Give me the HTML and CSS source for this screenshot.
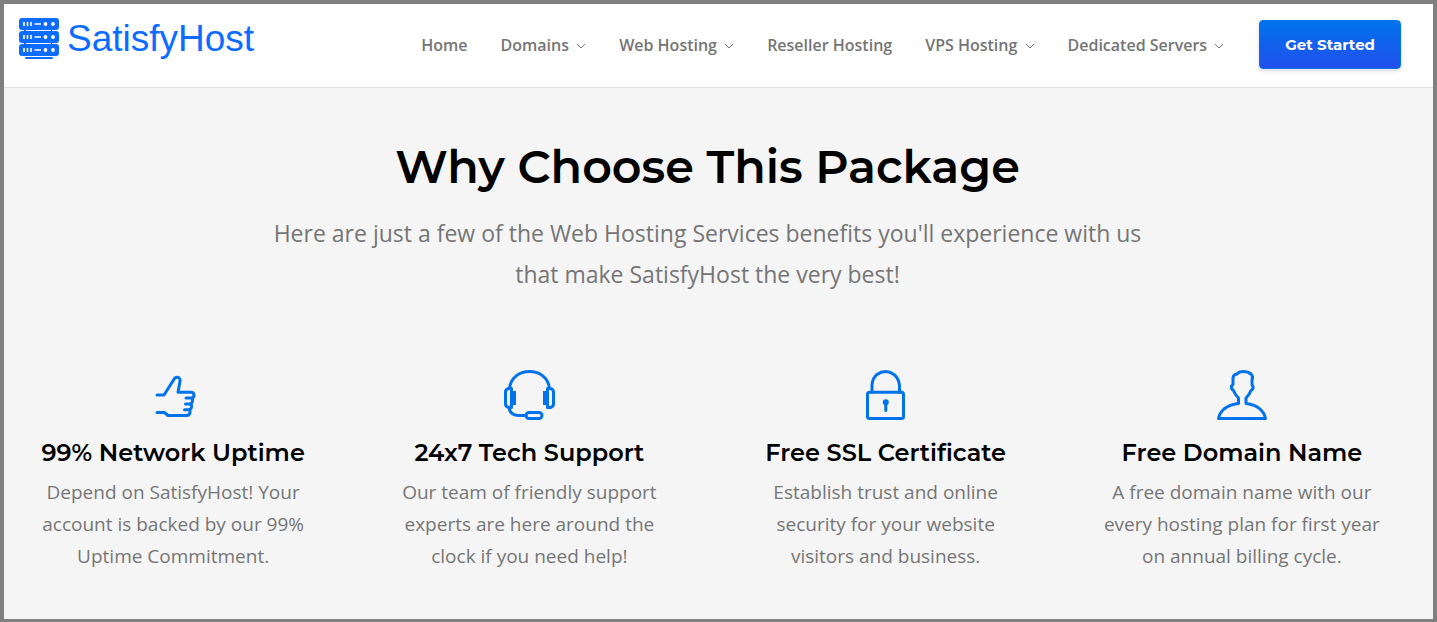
FILE: index.html
```
<!DOCTYPE html>
<html lang="en">

<head>
  <meta charset="UTF-8">
  <meta name="viewport" content="width=device-width, initial-scale=1.0">
  <title>SatisfyHost - Web Hosting</title>
  <link rel="stylesheet" href="styles.css">
</head>

<body>
  <header class="header">
    <a href="#" class="logo">
      <svg class="logo-icon" viewBox="0 0 40 42" aria-hidden="true">
        <g fill="#0c6cff">
          <rect x="0" y="0" width="40" height="12" rx="3" />
          <rect x="0" y="13" width="40" height="12" rx="3" />
          <rect x="0" y="26" width="40" height="12" rx="3" />
          <path d="M5 11h28v4H5zM5 24h28v4H5z" />
          <rect x="6" y="39" width="28" height="2" rx="1" />
        </g>
        <g fill="none" stroke="#fff">
          <path d="M7 12.500h25M7 25.500h25" />
          <path stroke-width="1.600" d="M5 4v4M8.500 4v4M12 4v4M5 17v4M8.500 17v4M12 17v4M5 30v4M8.500 30v4M12 30v4" />
          <path stroke-width="1.600" d="M15.500 6H22M15.500 19H22M15.500 32H22" />
        </g>
        <g fill="#fff">
          <circle cx="26.500" cy="6" r="1.900" />
          <circle cx="34" cy="6" r="1.900" />
          <circle cx="26.500" cy="19" r="1.900" />
          <circle cx="34" cy="19" r="1.900" />
          <circle cx="26.500" cy="32" r="1.900" />
          <circle cx="34" cy="32" r="1.900" />
        </g>
      </svg>
      <span>SatisfyHost</span>
    </a>
    <nav class="nav">
      <a href="#">Home</a>
      <a href="#">Domains <svg class="arrow" viewBox="0 0 10 6"><path d="M1 1l4 4 4-4" /></svg></a>
      <a href="#">Web Hosting <svg class="arrow" viewBox="0 0 10 6"><path d="M1 1l4 4 4-4" /></svg></a>
      <a href="#">Reseller Hosting</a>
      <a href="#">VPS Hosting <svg class="arrow" viewBox="0 0 10 6"><path d="M1 1l4 4 4-4" /></svg></a>
      <a href="#">Dedicated Servers <svg class="arrow" viewBox="0 0 10 6"><path d="M1 1l4 4 4-4" /></svg></a>
    </nav>
    <button class="start-button" type="button">Get Started</button>
  </header>

  <main class="why">
    <div class="intro">
      <h1>Why Choose This Package</h1>
      <p>Here are just a few of the Web Hosting Services benefits you'll experience with us that make SatisfyHost the very best!</p>
    </div>

    <div class="features">
      <div class="feature">
        <svg class="feature-icon" viewBox="-2 0 70 70" aria-hidden="true">
          <path d="M17 35h7L34.500 18.500Q36 16.500 38.500 17.500Q40.500 18.500 40 21.500L38 32.300H50.500Q54 32.300 54 35.200Q54 38 51 38H46M51 38Q53 38.500 52.500 41Q52 43.900 49.500 43.900H45.500M49.500 43.900Q52 44.300 51.500 47Q51 49.800 48.500 49.800H44.500M48.500 49.800Q50.500 50.300 50 52.500Q49.500 55.500 46.500 55.500H28L24.500 52.500H17" />
        </svg>
        <h2>99% Network Uptime</h2>
        <p>Depend on SatisfyHost! Your account is backed by our 99% Uptime Commitment.</p>
      </div>
      <div class="feature">
        <svg class="feature-icon" viewBox="-1 0 70 70" aria-hidden="true">
          <path d="M14.500 28.500C15.500 18 24 11.500 34.500 11.500S53.500 18 54.500 28.500" />
          <path d="M16.500 28.500h-3Q10.500 29.500 10.500 32v12Q10.500 46.500 13.500 47.500h3zM52.500 28.500h3Q58.500 29.500 58.500 32v12Q58.500 46.500 55.500 47.500h-3z" />
          <path class="solid" d="M16 31h5v14h-5zM48 31h5v14h-5z" />
          <path d="M14 47.500Q15 55.500 23.500 55.500H31" />
          <rect x="31" y="52.500" width="16" height="6" rx="3" />
        </svg>
        <h2>24x7 Tech Support</h2>
        <p>Our team of friendly support experts are here around the clock if you need help!</p>
      </div>
      <div class="feature">
        <svg class="feature-icon" viewBox="1 0 70 70" aria-hidden="true">
          <rect x="17.500" y="32.300" width="36" height="26.200" rx="2" />
          <path d="M22 32V25Q22.500 18 27 14.500Q31 11.500 35.500 11.500T44 14.500Q48.500 18 49.500 25V32" />
          <circle class="solid" cx="35.800" cy="42.300" r="3" />
          <path d="M35.800 43v7.500" />
        </svg>
        <h2>Free SSL Certificate</h2>
        <p>Establish trust and online security for your website visitors and business.</p>
      </div>
      <div class="feature">
        <svg class="feature-icon" viewBox="0 0 70 70" aria-hidden="true">
          <path d="M31.500 43.500V38Q28 34.500 26.500 30.500Q24 29 24.500 26L26 24.500V17.500Q26.500 14.500 30 14Q32 11.500 36 11.500Q41 11.500 44 14Q46.500 16.500 45 20V24.500L46 26.500Q46.500 29 44 30.500Q42.500 34.500 39 38V43.500Q48 44.500 53 49Q57.500 53 58.500 58.500H11.500Q12.500 53 17 49Q22.500 44.500 31.500 43.500Z" />
        </svg>
        <h2>Free Domain Name</h2>
        <p>A free domain name with our every hosting plan for first year on annual billing cycle.</p>
      </div>
    </div>
  </main>
</body>

</html>
```
FILE: styles.css
```
* {
  box-sizing: border-box;
}

body {
  margin: 0;
  min-height: 100vh;
  border: 4px solid #808080;
  border-bottom-width: 3px;
  background-color: #f5f5f5;
  color: #757575;
  font-family: "Open Sans", sans-serif;
}

.header {
  display: flex;
  align-items: center;
  padding: 14px 32px 18px 15px;
  background-color: #fff;
  border-bottom: 1px solid #dfdfdf;
}

.logo {
  display: flex;
  align-items: center;
  align-self: flex-start;
  gap: 8px;
  margin-right: auto;
  color: #0c6cff;
  font-family: "Liberation Sans", Arial, sans-serif;
  font-size: 37px;
  line-height: 40px;
  text-decoration: none;
}

.logo-icon {
  width: 40px;
  height: 42px;
}

.nav {
  display: flex;
  gap: 33px;
  margin-top: 2px;
  margin-right: 35px;
}

.nav a {
  color: #757575;
  font-size: 16px;
  font-weight: 600;
  line-height: 24px;
  text-decoration: none;
  white-space: nowrap;
}

.arrow {
  width: 10px;
  height: 6px;
  margin-left: 3px;
  vertical-align: 2px;
  fill: none;
  stroke: #757575;
}

.start-button {
  margin-top: 2px;
  padding: 0 25px;
  border: 1px solid #0073ec;
  border-radius: 4px;
  background-image: linear-gradient(#0073ec, #2250ee);
  box-shadow: 0 2px 4px rgba(0, 0, 0, 0.15);
  color: #fff;
  font-family: Montserrat, Inter, sans-serif;
  font-size: 15px;
  font-weight: 700;
  line-height: 47px;
  white-space: nowrap;
}

.why {
  padding: 49px 53px 40px 31px;
  text-align: center;
}

.intro {
  max-width: 900px;
  margin: 0 auto;
}

.intro h1 {
  margin: 0;
  color: #000;
  font-family: Montserrat, Inter, sans-serif;
  font-size: 46px;
  font-weight: 600;
  line-height: 60px;
}

.intro p {
  margin: 16px 0 0;
  font-size: 23px;
  line-height: 41px;
}

.features {
  display: grid;
  grid-template-columns: repeat(4, 1fr);
  gap: 80px;
  margin-top: 65px;
}

.feature-icon {
  display: block;
  width: 70px;
  height: 70px;
  margin: 0 auto;
  fill: none;
  stroke: #0073ec;
  stroke-width: 3;
  stroke-linecap: round;
  stroke-linejoin: round;
}

.feature-icon .solid {
  fill: #0073ec;
  stroke: none;
}

.feature h2 {
  margin: 8px 0;
  color: #000;
  font-family: Montserrat, Inter, sans-serif;
  font-size: 24px;
  font-weight: 600;
  line-height: 30px;
  white-space: nowrap;
}

.feature p {
  margin: 0;
  font-size: 19px;
  line-height: 32px;
}
```
